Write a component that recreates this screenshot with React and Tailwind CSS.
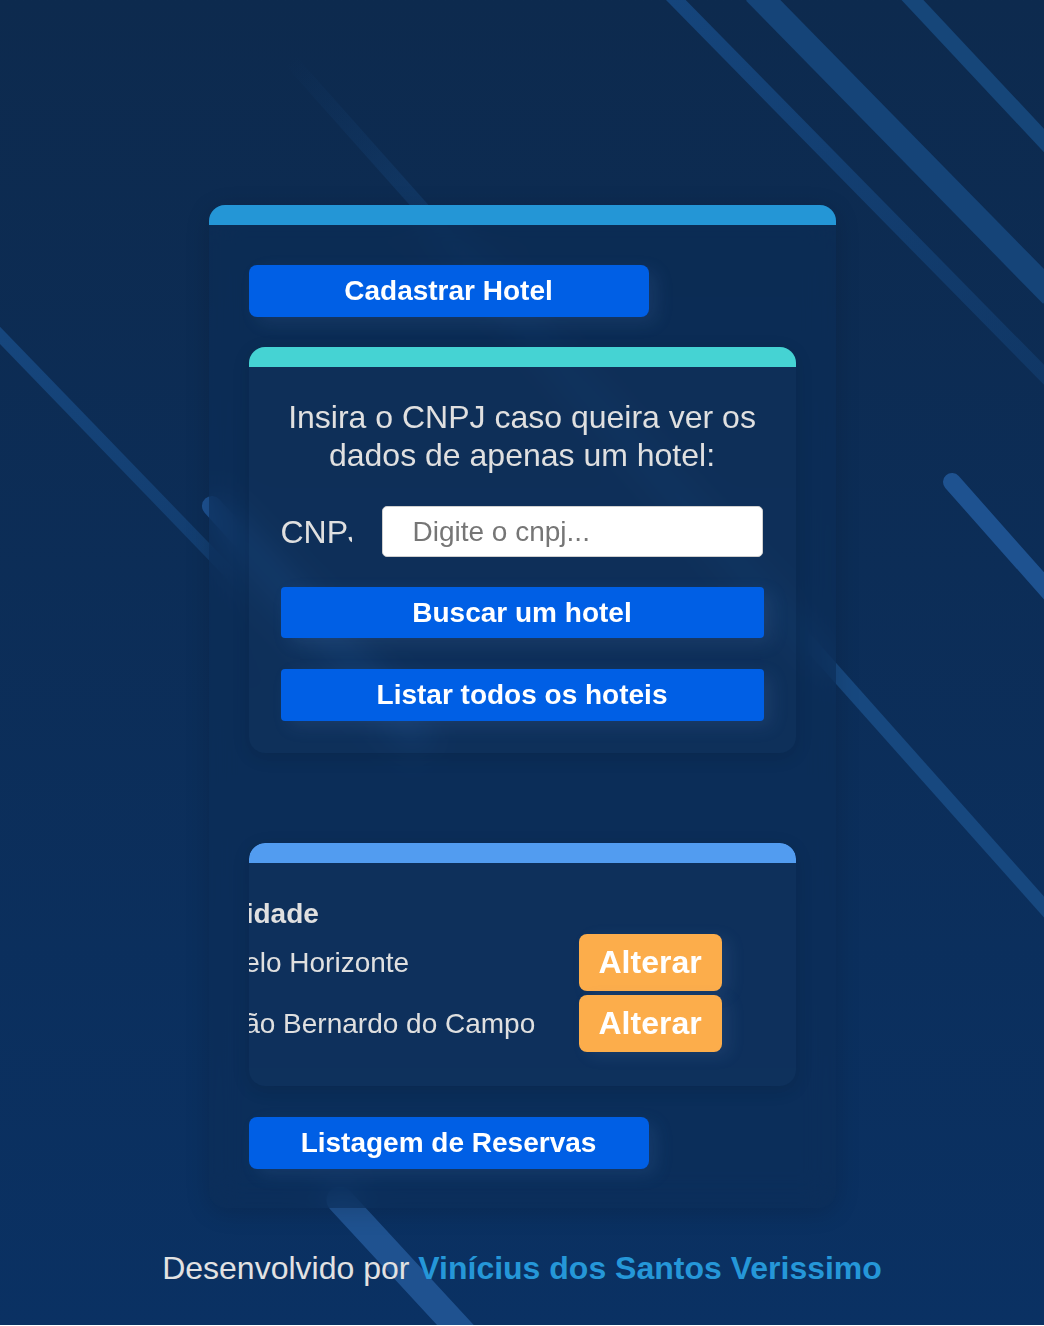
import React from 'react';

const hotels = [
  { id: 1, cidade: 'Belo Horizonte' },
  { id: 2, cidade: 'São Bernardo do Campo' },
];

// background stripes, drawn once behind everything
const Stripes = () => (
  <svg className="absolute inset-0" width="1044" height="1325" viewBox="0 0 1044 1325">
    <defs>
      <linearGradient id="fadeA" gradientUnits="userSpaceOnUse" x1="668" y1="0" x2="1044" y2="375">
        <stop offset="0" stopColor="#15457c" stopOpacity="1" />
        <stop offset="1" stopColor="#15457c" stopOpacity="0.45" />
      </linearGradient>
      <linearGradient id="fadeE" gradientUnits="userSpaceOnUse" x1="290" y1="60" x2="835" y2="680">
        <stop offset="0" stopColor="#17487f" stopOpacity="0" />
        <stop offset="0.35" stopColor="#17487f" stopOpacity="0.6" />
        <stop offset="1" stopColor="#17487f" stopOpacity="1" />
      </linearGradient>
      <linearGradient id="fadeL" gradientUnits="userSpaceOnUse" x1="0" y1="335" x2="420" y2="770">
        <stop offset="0" stopColor="#16467d" stopOpacity="1" />
        <stop offset="1" stopColor="#16467d" stopOpacity="0.3" />
      </linearGradient>
    </defs>
    <line x1="668" y1="-8" x2="1052" y2="383" stroke="url(#fadeA)" strokeWidth="14" />
    <line x1="755" y1="-8" x2="1052" y2="295" stroke="#154478" strokeWidth="25" />
    <line x1="905" y1="-8" x2="1052" y2="149" stroke="#164679" strokeWidth="16" />
    <line x1="-8" y1="327" x2="420" y2="770" stroke="url(#fadeL)" strokeWidth="12" />
    <line x1="212" y1="506" x2="420" y2="735" stroke="#1d5190" strokeWidth="20" strokeLinecap="round" />
    <line x1="290" y1="60" x2="1060" y2="925" stroke="url(#fadeE)" strokeWidth="14" />
    <line x1="952" y1="482" x2="1060" y2="604" stroke="#1e5290" strokeWidth="18" strokeLinecap="round" />
    <line x1="340" y1="1200" x2="484" y2="1356" stroke="#1f5290" strokeWidth="27" strokeLinecap="round" />
  </svg>
);

const BlueButton = ({ children, className = '' }) => (
  <button
    className={`flex items-center justify-center bg-[#005fe5] text-white font-bold text-[28px] shadow-[8px_6px_18px_rgba(110,150,210,0.12)] ${className}`}
  >
    {children}
  </button>
);

const App = () => {
  return (
    <div className="relative h-[1325px] overflow-hidden bg-linear-to-b from-[#0d2a4e] to-[#0a3163] font-['Liberation_Sans',Arial,sans-serif]">
      <Stripes />

      <div className="relative flex flex-col items-center pt-[205px]">
        {/* main panel */}
        <div className="w-[627px] rounded-[16px] bg-[#0c2d57]/60 backdrop-blur-lg shadow-[0_4px_24px_rgba(0,0,0,0.15)]">
          <div className="h-[20px] rounded-t-[16px] bg-[#2496d6]" />
          <div className="flex flex-col px-10 pt-10 pb-[39px]">
            <BlueButton className="w-[400px] h-[52px] rounded-[8px]">Cadastrar Hotel</BlueButton>

            {/* busca */}
            <div className="mt-[30px] rounded-[16px] bg-white/[0.015] shadow-[0_4px_18px_rgba(0,0,0,0.12)]">
              <div className="h-[20px] rounded-t-[16px] bg-[#45d3d3]" />
              <div className="flex flex-col px-8 pt-[31px] pb-[32px]">
                <p className="text-center text-[32px] leading-[38px] text-[#e0e0e0]">
                  Insira o CNPJ caso queira ver os<br />dados de apenas um hotel:
                </p>
                <div className="mt-[32px] flex items-center gap-[30px]">
                  <label className="w-[71px] overflow-hidden whitespace-nowrap text-[32px] leading-[38px] text-[#e0e0e0]">
                    CNPJ
                  </label>
                  <input
                    type="text"
                    placeholder="Digite o cnpj..."
                    className="h-[51px] w-[381px] rounded-[5px] border border-[#cfcfcf] bg-white pl-[30px] text-[28px] text-[#333] placeholder:text-[#767676] outline-none"
                  />
                </div>
                <BlueButton className="mt-[30px] w-full h-[51px] rounded-[4px]">Buscar um hotel</BlueButton>
                <BlueButton className="mt-[31px] w-full h-[52px] rounded-[4px]">Listar todos os hoteis</BlueButton>
              </div>
            </div>

            {/* resultados */}
            <div className="mt-[90px] overflow-hidden rounded-[16px] bg-white/[0.015] shadow-[0_4px_18px_rgba(0,0,0,0.12)]">
              <div className="h-[20px] rounded-t-[16px] bg-[#529cf0]" />
              <div className="pt-[32px] pb-[31px]">
                <table className="-ml-[26px] border-separate border-spacing-[2px] text-[#e0e0e0]">
                  <thead>
                    <tr>
                      <th className="w-[351px] p-px text-left text-[28px] leading-[32px] font-bold">Cidade</th>
                      <th className="p-px" />
                    </tr>
                  </thead>
                  <tbody>
                    {hotels.map(h => (
                      <tr key={h.id}>
                        <td className="p-px align-middle text-[28px] leading-[32px] whitespace-nowrap">{h.cidade}</td>
                        <td className="p-px align-middle">
                          <button className="rounded-[8px] bg-[#fcad4b] px-5 py-[10px] text-[32px] leading-[37px] font-bold text-white shadow-[8px_4px_16px_rgba(110,150,210,0.12)]">
                            Alterar
                          </button>
                        </td>
                      </tr>
                    ))}
                  </tbody>
                </table>
              </div>
            </div>

            <BlueButton className="mt-[31px] w-[400px] h-[52px] rounded-[8px]">Listagem de Reservas</BlueButton>
          </div>
        </div>

        <footer className="mt-[36px] text-[32px] leading-[48px] text-[#e2e2e2]">
          Desenvolvido por <span className="font-bold text-[#2597d8]">Vinícius dos Santos Verissimo</span>
        </footer>
      </div>
    </div>
  );
};

export default App;
